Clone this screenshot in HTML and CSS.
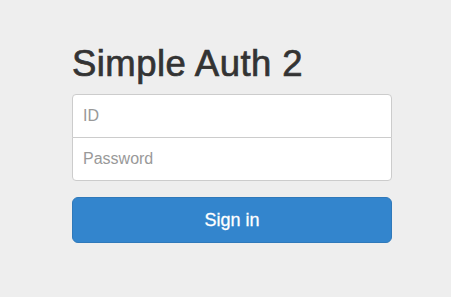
FILE: index.html
```html
<!DOCTYPE html>
<html>
<head>
<meta charset="utf-8">
<link rel="stylesheet" href="styles.css">
</head>
<body>
<div class="container">
  <form class="form-signin">
    <h2 class="heading">Simple Auth 2</h2>
    <input class="field field-top" type="text" placeholder="ID">
    <input class="field field-bottom" type="password" placeholder="Password">
    <button class="btn" type="button">Sign in</button>
  </form>
</div>
</body>
</html>
```
FILE: styles.css
```css
html, body {
  margin: 0;
  padding: 0;
  background: #eeeeee;
  font-family: "Liberation Sans", Arial, sans-serif;
  color: #333333;
}
.container {
  padding: 44px 0 0 72px;
}
.form-signin {
  width: 320px;
  display: flex;
  flex-direction: column;
}
.heading {
  margin: 0 0 10px 0;
  font-size: 36.5px;
  line-height: 1.1;
  font-weight: 400;
  -webkit-text-stroke: 0.7px #333333;
  letter-spacing: 0.45px;
  color: #333333;
}
.field {
  box-sizing: border-box;
  display: block;
  width: 100%;
  height: 44px;
  padding: 10px 10px;
  font-size: 16px;
  font-family: "Liberation Sans", Arial, sans-serif;
  color: #555;
  background: #fff;
  border: 1px solid #cccccc;
  outline: none;
  margin: 0;
}
.field::placeholder {
  color: #999999;
}
.field-top {
  border-radius: 4px 4px 0 0;
  margin-bottom: -1px;
}
.field-bottom {
  border-radius: 0 0 4px 4px;
  margin-bottom: 16px;
}
.btn {
  box-sizing: border-box;
  width: 100%;
  height: 46px;
  padding: 10px 16px;
  font-size: 18px;
  font-family: "Liberation Sans", Arial, sans-serif;
  color: #ffffff;
  -webkit-text-stroke: 0.3px #ffffff;
  background: #3385cd;
  border: 1px solid #2f79ba;
  border-radius: 6px;
  cursor: pointer;
}
```
